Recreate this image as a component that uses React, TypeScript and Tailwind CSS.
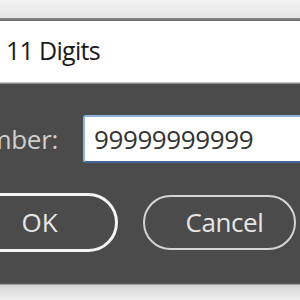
import React from 'react';

const App: React.FC = () => {
  return (
    <div className="w-[300px] h-[300px] overflow-hidden bg-[#4b4b4b] flex flex-col" style={{ fontFamily: '"Open Sans", "Noto Sans", sans-serif' }}>
      {/* window chrome above */}
      <div className="h-[18px] bg-gradient-to-b from-[#f2f2f2] to-[#e6e6e6] shrink-0" />
      <div className="h-[3px] bg-gradient-to-b from-[#8a8a8a] to-[#6e6e6e] shrink-0" />

      {/* title bar */}
      <div className="h-[61px] bg-white flex items-center pl-[6px] shrink-0">
        <span className="text-[25px] text-[#1b1b1b] tracking-[-0.7px] leading-none pb-[2px]">11 Digits</span>
      </div>
      <div className="h-[1px] bg-[#c4c4c4] shrink-0" />
      <div className="h-[1px] bg-[#8c8c8c] shrink-0" />

      {/* body */}
      <div className="flex-1 flex flex-col">
        <div className="flex items-center mt-[31px] h-[48px]">
          <div className="w-[58px] overflow-hidden flex justify-end shrink-0">
            <span className="text-[26px] text-[#cfcfcf] whitespace-nowrap leading-none tracking-[-0.3px]">Number:</span>
          </div>
          <div className="ml-[25px] w-[240px] h-[48px] shrink-0 bg-white rounded-[3px] border-2 border-[#8db3de] border-b-[#3f6799] flex items-center pl-[9px]">
            <span className="text-[26px] text-[#333333] leading-none tracking-[-0.4px]">99999999999</span>
          </div>
        </div>

        <div className="flex items-center mt-[30px] h-[59px]">
          <button className="ml-[-39px] w-[157px] h-[59px] shrink-0 rounded-full border-[3px] border-[#f4f4f4] flex items-center justify-center">
            <span className="text-[26px] text-[#e6e6e6] leading-none pb-[2px]">OK</span>
          </button>
          <button className="ml-[25px] w-[153px] h-[55px] shrink-0 rounded-full border-2 border-[#d4d4d4] flex items-center justify-center">
            <span className="text-[26px] text-[#e6e6e6] leading-none pb-[2px] pl-[10px] tracking-[-0.4px]">Cancel</span>
          </button>
        </div>
      </div>

      {/* bottom chrome */}
      <div className="h-[1px] bg-[#5e5e5e] shrink-0" />
      <div className="h-[1px] bg-[#9a9a9a] shrink-0" />
      <div className="h-[15px] bg-gradient-to-b from-[#d6d6d6] to-[#efefef] shrink-0" />
    </div>
  );
};

export default App;
